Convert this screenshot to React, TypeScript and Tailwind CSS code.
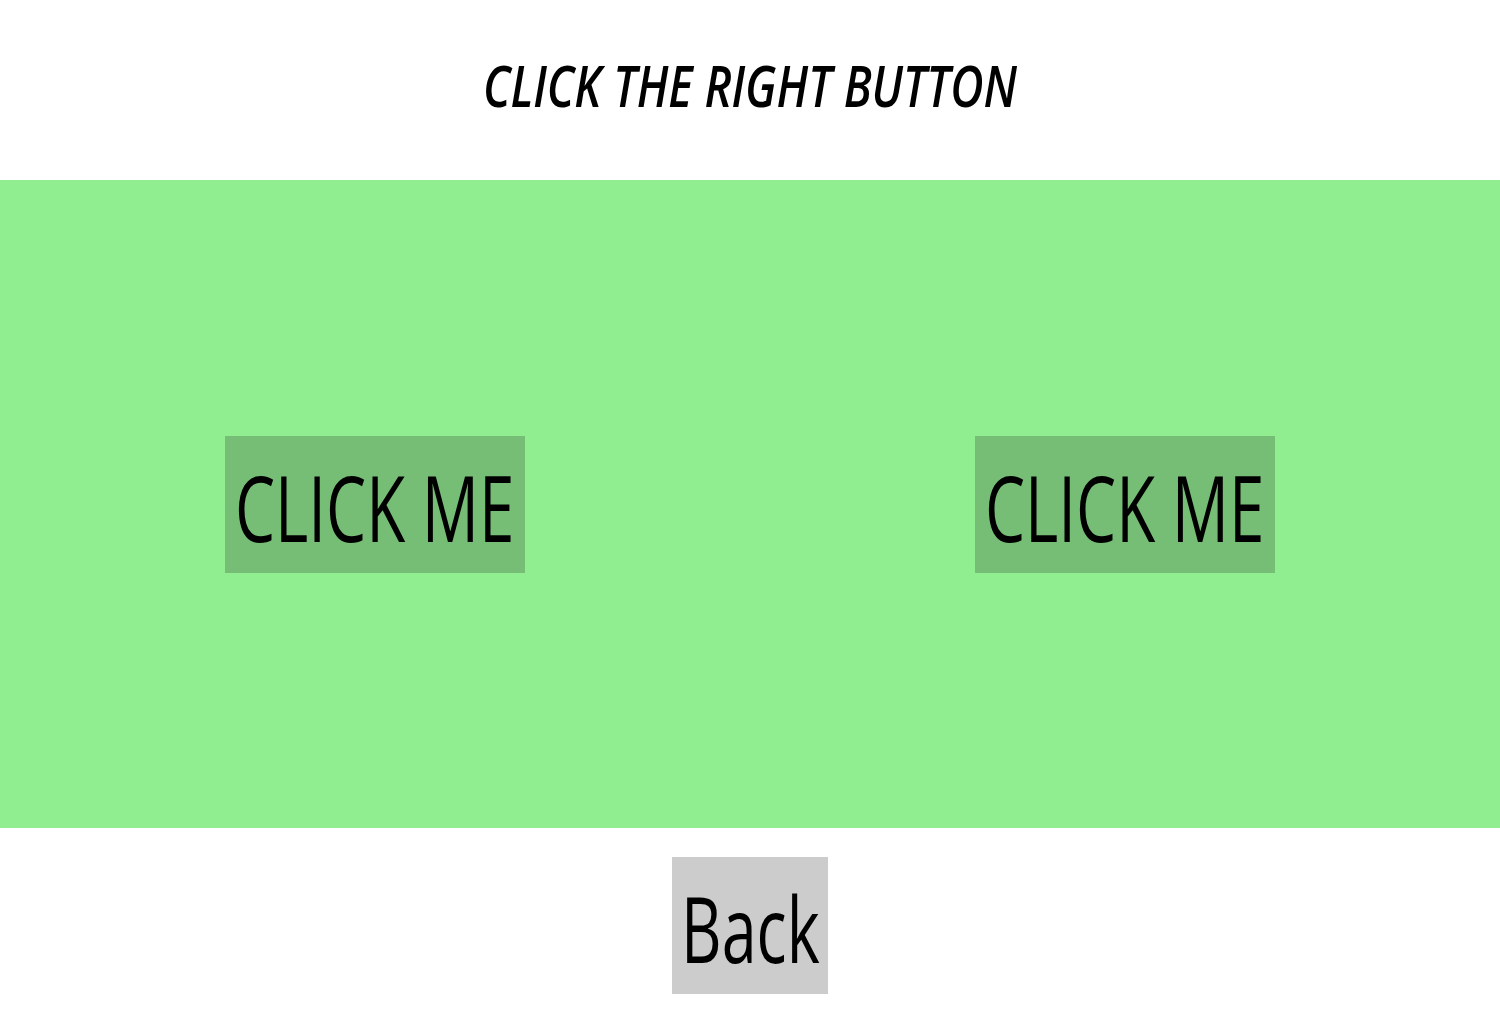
export default function App() {
  return (
    <div className="w-[1500px] h-[1020px] bg-white flex flex-col" style={{ fontFamily: '"Open Sans", "Noto Sans", sans-serif' }}>
      <div className="h-[180px] flex items-center justify-center">
        <h1 className="text-[58px] font-semibold italic text-black leading-none scale-x-[0.79] whitespace-nowrap -mt-[10px]">
          CLICK THE RIGHT BUTTON
        </h1>
      </div>
      <div className="h-[648px] bg-[#90ee90] grid grid-cols-2">
        {[0, 1].map((i) => (
          <div key={i} className="flex items-center justify-center">
            <button className="w-[300px] h-[137px] bg-[#76bd76] flex items-center justify-center pt-[6px]">
              <span className="text-[91px] leading-none text-black scale-x-[0.7] whitespace-nowrap">CLICK ME</span>
            </button>
          </div>
        ))}
      </div>
      <div className="flex justify-center pt-[29px]">
        <button className="w-[156px] h-[137px] bg-[#cccccc] flex items-center justify-center pt-[5px]">
          <span className="text-[91px] leading-none text-black scale-x-[0.69] whitespace-nowrap">Back</span>
        </button>
      </div>
    </div>
  );
}
